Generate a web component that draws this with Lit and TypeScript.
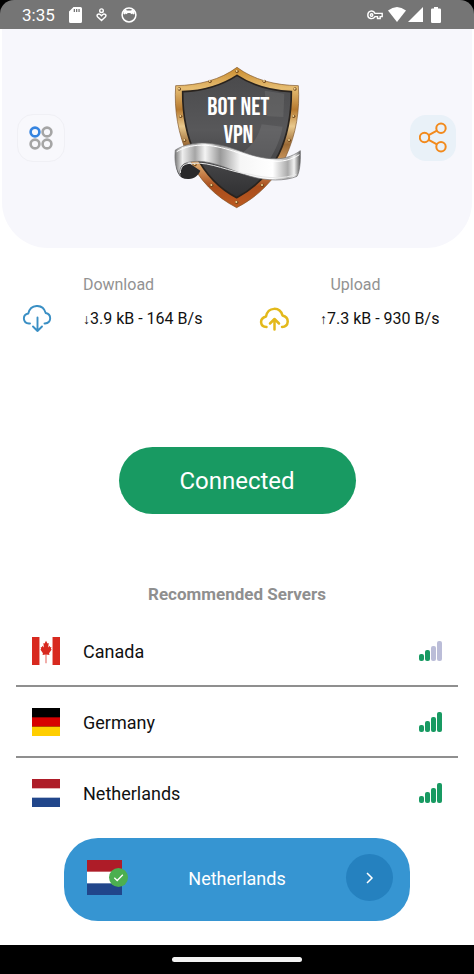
import { LitElement, html, css, svg } from "lit";
import { customElement, property } from "lit/decorators.js";

type Country = "canada" | "germany" | "netherlands";

interface Server {
  country: Country;
  name: string;
  strength: number;
}

const SERVERS: Server[] = [
  { country: "canada", name: "Canada", strength: 2 },
  { country: "germany", name: "Germany", strength: 4 },
  { country: "netherlands", name: "Netherlands", strength: 4 },
];

@customElement("country-flag")
class CountryFlag extends LitElement {
  @property() country: Country = "canada";

  static styles = css`
    :host {
      display: block;
    }
    .flag {
      display: block;
      width: 100%;
      height: 100%;
    }
  `;

  private art() {
    if (this.country === "germany") {
      return svg`<rect width="30" height="30" fill="#000"/><rect y="10" width="30" height="10" fill="#d80000"/><rect y="20" width="30" height="10" fill="#ffce00"/>`;
    }
    if (this.country === "netherlands") {
      return svg`<rect width="30" height="30" fill="#fff"/><rect width="30" height="10" fill="#ae1c28"/><rect y="20" width="30" height="10" fill="#21468b"/>`;
    }
    return svg`<rect width="30" height="30" fill="#fff"/><rect width="8" height="30" fill="#d8291f"/><rect x="22" width="8" height="30" fill="#d8291f"/>
      <path fill="#d8291f" d="M15 4l1.600 3 1.300-.7-.5 5 1.600-1.800.5 1.400 1.300-.3-.5 2.200.8.7-2.800 3.800.4 2-3.300-.6V28h-.8v-9.300l-3.300.6.4-2L9 13.500l.8-.7-.5-2.200 1.300.3.5-1.400 1.600 1.800-.5-5 1.300.7z"/>`;
  }

  render() {
    return html`<svg class="flag" viewBox="0 0 30 30" aria-hidden="true">${this.art()}</svg>`;
  }
}

@customElement("signal-bars")
class SignalBars extends LitElement {
  @property({ type: Number }) strength = 0;

  static styles = css`
    :host {
      display: block;
      width: 23px;
      height: 20px;
    }
    .bars {
      display: block;
    }
    .on {
      fill: #189a62;
    }
    .off {
      fill: #bbbdd8;
    }
  `;

  render() {
    return html`<svg class="bars" width="23" height="20" viewBox="0 0 23 20" aria-hidden="true">
      ${[7, 11, 15, 20].map(
        (h, i) =>
          svg`<rect class=${i < this.strength ? "on" : "off"} x=${i * 6} y=${20 - h} width="5" height=${h} rx="2"/>`
      )}
    </svg>`;
  }
}

@customElement("brand-shield")
class BrandShield extends LitElement {
  static styles = css`
    :host {
      display: block;
    }
    .art {
      display: block;
    }
    .word {
      font-family: "Bebas Neue", "Roboto Condensed", "Liberation Sans Narrow", "Open Sans Condensed", Roboto, sans-serif;
      font-weight: 400;
      font-size: 75px;
      fill: #fff;
      text-anchor: middle;
    }
  `;

  render() {
    const rivets = [
      [229, 49], [148, 79], [311, 79], [56, 102], [403, 102], [60, 184],
      [399, 184], [72, 256], [386, 256], [103, 329], [354, 329], [153, 391], [305, 391], [228, 442],
    ];
    return html`<svg class="art" width="150" height="165" viewBox="7 0 450 495" role="img" aria-label="Bot Net VPN">
      <defs>
        <linearGradient id="rim" x1="0" y1="0" x2="0" y2="1">
          <stop offset="0" stop-color="#c98b2c"/>
          <stop offset=".15" stop-color="#e6bd72"/>
          <stop offset=".3" stop-color="#b77a30"/>
          <stop offset=".42" stop-color="#e9c98d"/>
          <stop offset=".55" stop-color="#9b6a35"/>
          <stop offset=".7" stop-color="#dba469"/>
          <stop offset=".85" stop-color="#a84d1c"/>
          <stop offset="1" stop-color="#bd5a20"/>
        </linearGradient>
        <linearGradient id="plate" x1="0" y1="0" x2="0" y2="1">
          <stop offset="0" stop-color="#4a4a4c"/>
          <stop offset=".45" stop-color="#58585a"/>
          <stop offset="1" stop-color="#303032"/>
        </linearGradient>
        <linearGradient id="silver" x1="0" y1="0" x2="1" y2="0">
          <stop offset="0" stop-color="#777"/>
          <stop offset=".06" stop-color="#eee"/>
          <stop offset=".16" stop-color="#a5a5a5"/>
          <stop offset=".24" stop-color="#f4f4f4"/>
          <stop offset=".36" stop-color="#999"/>
          <stop offset=".52" stop-color="#f6f6f6"/>
          <stop offset=".78" stop-color="#fff"/>
          <stop offset=".9" stop-color="#aaa"/>
          <stop offset=".95" stop-color="#f2f2f2"/>
          <stop offset="1" stop-color="#555"/>
        </linearGradient>
      </defs>
      <path d="M229 37C180 74 115 91 45 92C40 165 52 236 83 306C115 376 164 425 228 458C292 425 342 376 375 306C407 236 418 165 413 92C343 91 278 74 229 37Z" fill="url(#rim)" stroke="#80562a" stroke-width="2"/>
      <path d="M229 61C185 90 130 107 66 110C66 180 76 240 104 298C133 356 174 400 228 428C282 400 325 356 354 298C382 240 392 180 392 110C328 107 273 90 229 61Z" fill="url(#plate)" stroke="#29231e" stroke-width="5"/>
      <path d="M312 107L371 116L368 186L320 184Z" fill="#707072" opacity=".45"/>
      <path d="M303 208L366 215C360 250 345 285 326 315L247 292C278 270 294 240 303 208Z" fill="#707072" opacity=".5"/>
      ${rivets.map(
        ([x, y]) => svg`<circle cx=${x} cy=${y} r="5" fill="#70461b"/><circle cx=${x - 1} cy=${y - 1} r="3" fill="#f5d899"/>`
      )}
      <path d="M46 315C45 350 54 374 85 372C102 371 113 361 119 347L86 325Z" fill="#29292b"/>
      <path d="M44 285C100 252 165 262 231 286C303 313 367 326 419 287C420 325 417 349 409 364C373 379 318 378 269 364C205 346 146 308 83 322C63 326 54 341 59 362C43 343 41 310 44 285Z" fill="url(#silver)" stroke="#6e6e70" stroke-width="2"/>
      <path d="M48 290C100 259 165 269 231 293C303 320 367 332 416 299" fill="none" stroke="#fff" stroke-width="3"/>
      <path d="M59 354C59 330 76 324 96 325C150 319 206 352 269 358C318 371 373 372 407 358" fill="none" stroke="#e8e8e8" stroke-width="3"/>
      <text class="word" x="233" y="180">BOT NET</text>
      <text class="word" x="233" y="265">VPN</text>
    </svg>`;
  }
}

@customElement("app-root")
class AppRoot extends LitElement {
  static styles = css`
    :host {
      display: flex;
      flex-direction: column;
      min-height: 100vh;
      background: #000;
      font-family: Roboto, "Liberation Sans", sans-serif;
      color: #111;
    }
    button {
      font: inherit;
      border: 0;
      padding: 0;
      cursor: pointer;
    }
    svg {
      display: block;
    }
    .status {
      display: flex;
      align-items: center;
      height: 29px;
      box-sizing: border-box;
      padding: 0 33px 0 22px;
      border-radius: 14px 14px 0 0;
      background: #757575;
      color: #fff;
      font-size: 17px;
    }
    .notices {
      display: flex;
      align-items: center;
      gap: 14px;
      margin-left: 14px;
    }
    .system {
      display: flex;
      align-items: center;
      margin-left: auto;
    }
    .battery {
      margin-left: 8px;
    }
    .wifi {
      margin: 0 2px 0 5px;
    }
    .screen {
      flex: 1;
      display: flex;
      flex-direction: column;
      background: #fff;
    }
    .hero {
      display: flex;
      justify-content: space-between;
      align-items: center;
      margin: 0 2px;
      padding: 26px 16px 28px 15px;
      border-radius: 0 0 46px 46px;
      background: #f7f7fc;
    }
    .tile {
      display: grid;
      place-items: center;
      width: 46px;
      height: 46px;
      border-radius: 16px;
      background: #e9f1f8;
    }
    .menu {
      width: 48px;
      height: 48px;
      box-sizing: border-box;
      background: #f8f8fc;
      border: 1px solid #f0f0f5;
    }
    .speeds {
      display: grid;
      grid-template-columns: 1fr 1fr;
      padding-top: 27px;
    }
    .speed {
      display: grid;
      grid-template-columns: 30px 1fr;
      column-gap: 30px;
      row-gap: 10px;
      align-items: center;
      padding-left: 22px;
    }
    .caption {
      grid-column: 1 / -1;
      margin: 0 22px 0 0;
      text-align: center;
      font-size: 16px;
      line-height: 20px;
      color: #929292;
    }
    .value {
      display: flex;
      align-items: center;
      margin: 0;
      padding-left: 1px;
      font-size: 16px;
      line-height: 28px;
      white-space: nowrap;
    }
    .arrow {
      font-family: "Liberation Sans", sans-serif;
      font-size: 14px;
    }
    .connect {
      align-self: center;
      width: 50%;
      max-width: 300px;
      height: 67px;
      margin-top: 114px;
      border-radius: 34px;
      background: #189a62;
      color: #fff;
      font-size: 24px;
    }
    .heading {
      margin: 70px 0 0;
      text-align: center;
      font-size: 17px;
      line-height: 20px;
      font-weight: 700;
      color: #8f8f8f;
    }
    .servers {
      list-style: none;
      margin: 12px 16px 0;
      padding: 0;
    }
    .item + .item {
      border-top: 2px solid #8f8f8f;
    }
    .server {
      display: flex;
      align-items: center;
      width: 100%;
      height: 69px;
      padding: 0 16px;
      background: none;
      color: inherit;
      font-size: 18px;
    }
    .name {
      padding-top: 2px;
    }
    .flag {
      width: 28px;
      height: 28px;
      margin-right: 23px;
    }
    .signal {
      margin-left: auto;
    }
    .current {
      display: grid;
      grid-template-columns: 1fr auto 1fr;
      align-items: center;
      height: 83px;
      box-sizing: border-box;
      margin: 11px 64px 24px;
      padding: 0 17px 4px;
      border-radius: 34px;
      background: #3695d2;
      color: #fff;
      font-size: 18px;
    }
    .chosen {
      position: relative;
      width: 35px;
      height: 35px;
      margin-left: 6px;
    }
    .chosen-flag {
      width: 35px;
      height: 35px;
    }
    .tick {
      position: absolute;
      right: -6px;
      top: 8px;
    }
    .go {
      justify-self: end;
      display: grid;
      place-items: center;
      width: 47px;
      height: 47px;
      border-radius: 50%;
      background: #2581bf;
    }
    .nav {
      display: grid;
      place-items: center;
      height: 29px;
    }
    .pill {
      width: 130px;
      height: 5px;
      border-radius: 3px;
      background: #f2f2f2;
    }
  `;

  private statusBar() {
    return html`<header class="status">
      <span>3:35</span>
      <div class="notices">
        <svg width="13" height="16" viewBox="0 0 13 16" aria-hidden="true">
          <path fill="#fff" fill-rule="evenodd" d="M4.500 0H11.500Q13 0 13 1.500V14.500Q13 16 11.500 16H1.500Q0 16 0 14.500V4.500ZM4.700 2V5H6V2ZM7 2V5H8.300V2ZM9.400 2V5H10.700V2Z"/>
        </svg>
        <svg width="11" height="14" viewBox="0 0 11 14" fill="none" stroke="#fff" stroke-width="1.400" aria-hidden="true">
          <circle cx="5.500" cy="2.700" r="1.800"/>
          <path d="M5.500 12.500L1.500 8.700C.2 7 2.600 5 4.200 6.500L5.500 7.800L6.800 6.500C8.400 5 10.800 7 9.500 8.700Z"/>
        </svg>
        <svg width="16" height="16" viewBox="0 0 16 16" aria-hidden="true">
          <circle cx="8" cy="8" r="6.900" fill="none" stroke="#fff" stroke-width="1.500"/>
          <path fill="#fff" d="M2.500 4.500L4.500 2.500L6 3.500H10L11.500 2.500L13.500 4.500V7L12 7.500L11.500 6.500L10 7.300L9.500 6H6.500L6 7.300L4.500 6.500L4 7.500L2.500 7Z"/>
        </svg>
      </div>
      <div class="system">
        <svg width="16" height="10" viewBox="0 0 16 10" fill="none" stroke="#fff" stroke-width="1.400" aria-hidden="true">
          <path d="M8 3.400C6.300-.4.800.7.800 5S6.300 9.600 8 6.600H10.500V8.500H13.200V6.600H15.200V3.400Z"/>
          <circle cx="4.600" cy="5" r="1.200"/>
        </svg>
        <svg class="wifi" width="18" height="15" viewBox="0 0 18 15" aria-hidden="true">
          <path fill="#fff" d="M0 3.600Q9-3.600 18 3.600L9 15Z"/>
        </svg>
        <svg width="15" height="15" viewBox="0 0 15 15" aria-hidden="true"><path fill="#fff" d="M15 0V15H0Z"/></svg>
        <svg class="battery" width="10" height="16" viewBox="0 0 10 16" aria-hidden="true">
          <path fill="#fff" d="M3 0H7V1.500H8.800Q10 1.500 10 2.700V14.800Q10 16 8.800 16H1.200Q0 16 0 14.800V2.700Q0 1.500 1.200 1.500H3Z"/>
        </svg>
      </div>
    </header>`;
  }

  render() {
    return html`
      ${this.statusBar()}
      <main class="screen">
        <section class="hero">
          <button class="tile menu" aria-label="Menu">
            <svg width="24" height="24" viewBox="0 0 24 24" fill="none" stroke="#a5a5a5" stroke-width="2.600">
              <circle cx="6" cy="6" r="4.400" stroke="#3584e0"/>
              <circle cx="18" cy="6" r="4.400"/>
              <circle cx="6" cy="18" r="4.400"/>
              <circle cx="18" cy="18" r="4.400"/>
            </svg>
          </button>
          <brand-shield></brand-shield>
          <button class="tile" aria-label="Share">
            <svg width="28" height="31" viewBox="0 0 28 31" fill="none" stroke="#f28a1c" stroke-width="2">
              <circle cx="5.500" cy="15.500" r="4.700"/>
              <circle cx="22" cy="6.300" r="4.700"/>
              <circle cx="22" cy="24.700" r="4.700"/>
              <path d="M9.700 13.200L17.900 8.600M9.700 17.800L17.900 22.400"/>
            </svg>
          </button>
        </section>

        <section class="speeds">
          <div class="speed">
            <p class="caption">Download</p>
            <svg width="30" height="28" viewBox="0 0 30 28" fill="none" stroke="#3a8fc4" stroke-width="1.900" stroke-linecap="round" stroke-linejoin="round" aria-hidden="true">
              <path d="M8 18.500H7C.8 18-.1 9.800 6.300 8.500C8.500-1.500 21-1.500 23.700 8C30 9.500 29.500 18 23 18.500H22.500"/>
              <path d="M15.500 12.500V26M11 21.500L15.500 26L20 21.500"/>
            </svg>
            <p class="value"><span class="arrow">↓</span>3.9 kB - 164 B/s</p>
          </div>
          <div class="speed">
            <p class="caption">Upload</p>
            <svg width="30" height="24" viewBox="0 0 30 24" fill="none" stroke="#e3b91b" stroke-width="2.500" stroke-linecap="round" stroke-linejoin="round" aria-hidden="true">
              <path d="M7.500 20C.8 19.700 0 11.500 7 9.500C9-.5 21-.5 23.500 8.500C31 10.500 30 19.500 23 20"/>
              <path d="M15.500 22.500V12.500M11 16.500L15.500 12L20 16.500"/>
            </svg>
            <p class="value"><span class="arrow">↑</span>7.3 kB - 930 B/s</p>
          </div>
        </section>

        <button class="connect">Connected</button>

        <h2 class="heading">Recommended Servers</h2>
        <ul class="servers">
          ${SERVERS.map(
            (s) => html`<li class="item">
              <button class="server">
                <country-flag class="flag" .country=${s.country}></country-flag>
                <span class="name">${s.name}</span>
                <signal-bars class="signal" .strength=${s.strength}></signal-bars>
              </button>
            </li>`
          )}
        </ul>

        <section class="current">
          <div class="chosen">
            <country-flag class="chosen-flag" .country=${"netherlands"}></country-flag>
            <svg class="tick" width="19" height="19" viewBox="0 0 19 19" aria-hidden="true">
              <circle cx="9.500" cy="9.500" r="9.500" fill="#4caf50"/>
              <path d="M5.300 9.700L8.200 12.500L13.800 6.800" fill="none" stroke="#fff" stroke-width="1.300"/>
            </svg>
          </div>
          <span class="name">Netherlands</span>
          <button class="go" aria-label="Choose server">
            <svg width="8" height="12" viewBox="0 0 8 12" fill="none" stroke="#fff" stroke-width="1.500"><path d="M1 1L6 6L1 11"/></svg>
          </button>
        </section>
      </main>
      <footer class="nav"><div class="pill"></div></footer>
    `;
  }
}
